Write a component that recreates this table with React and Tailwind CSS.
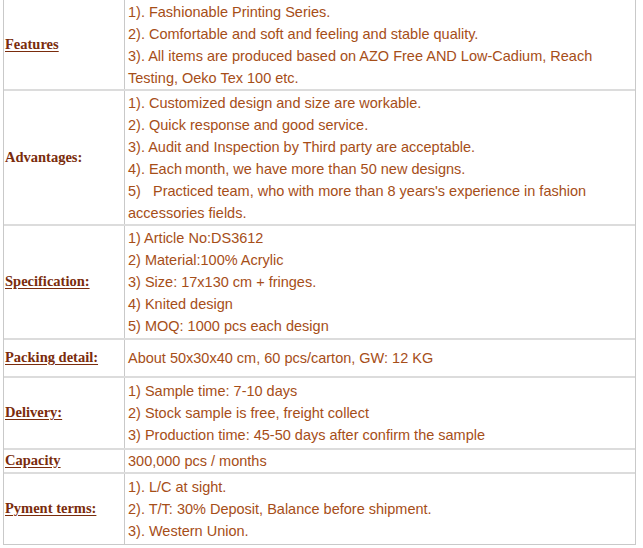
import React from 'react';

// Product info table rows
const rows = [
  {
    label: 'Features',
    h: 'h-[91px]',
    lines: [
      '1). Fashionable Printing Series.',
      '2). Comfortable and soft and feeling and stable quality.',
      '3). All items are produced based on AZO Free AND Low-Cadium, Reach Testing, Oeko Tex 100 etc.',
    ],
  },
  {
    label: 'Advantages:',
    plain: true,
    h: 'h-[135px]',
    lines: [
      '1). Customized design and size are workable.',
      '2). Quick response and good service.',
      '3). Audit and Inspection by Third party are acceptable.',
      '4). Each\u2009month, we have more than 50 new designs.',
      "5)\u00a0\u00a0 Practiced team, who with more than 8 years's experience in fashion accessories fields.",
    ],
  },
  {
    label: 'Specification:',
    h: 'h-[114px]',
    lines: [
      '1) Article No:DS3612',
      '2) Material:100% Acrylic',
      '3) Size: 17x130 cm + fringes.',
      '4) Knited design',
      '5) MOQ: 1000 pcs each design',
    ],
  },
  {
    label: 'Packing detail:',
    h: 'h-[38px]',
    lines: ['About 50x30x40 cm, 60 pcs/carton, GW: 12 KG'],
  },
  {
    label: 'Delivery:',
    h: 'h-[72px]',
    lines: [
      '1) Sample time: 7-10 days',
      '2) Stock sample is free, freight collect',
      '3) Production time: 45-50 days after confirm the sample',
    ],
  },
  {
    label: 'Capacity',
    h: 'h-[24px]',
    lines: ['300,000 pcs / months'],
  },
  {
    label: 'Pyment terms:',
    h: 'h-[71px]',
    lines: [
      '1). L/C at sight.',
      '2). T/T: 30% Deposit, Balance before shipment.',
      '3). Western Union.',
    ],
  },
];

const App = () => {
  return (
    <div className="w-[643px] h-[548px] bg-white overflow-hidden">
      <div className="ml-[3px] w-[633px] border-x border-[#c9c9c9]">
        {rows.map((r, i) => (
          <div
            key={r.label}
            className={`flex ${r.h} ${
              i === rows.length - 1
                ? 'border-b border-[#c9c9c9]'
                : 'border-b-2 border-[#dcdcdc]'
            }`}
          >
            <div className="w-[121px] shrink-0 flex items-center pl-[1px] border-r border-[#c9c9c9]">
              <span
                className={`font-['Liberation_Serif',serif] font-bold text-[14.5px] text-[#7a2c0c] ${
                  r.plain ? '' : 'underline underline-offset-2'
                }`}
              >
                {r.label}
              </span>
            </div>
            <div className="flex-1 flex flex-col justify-center pl-[3px] pr-[8px] font-['Liberation_Sans',Arial,sans-serif] text-[14.5px] leading-[22px] text-[#a64e18]">
              {r.lines.map((l) => (
                <div key={l}>{l}</div>
              ))}
            </div>
          </div>
        ))}
      </div>
    </div>
  );
};

export default App;
